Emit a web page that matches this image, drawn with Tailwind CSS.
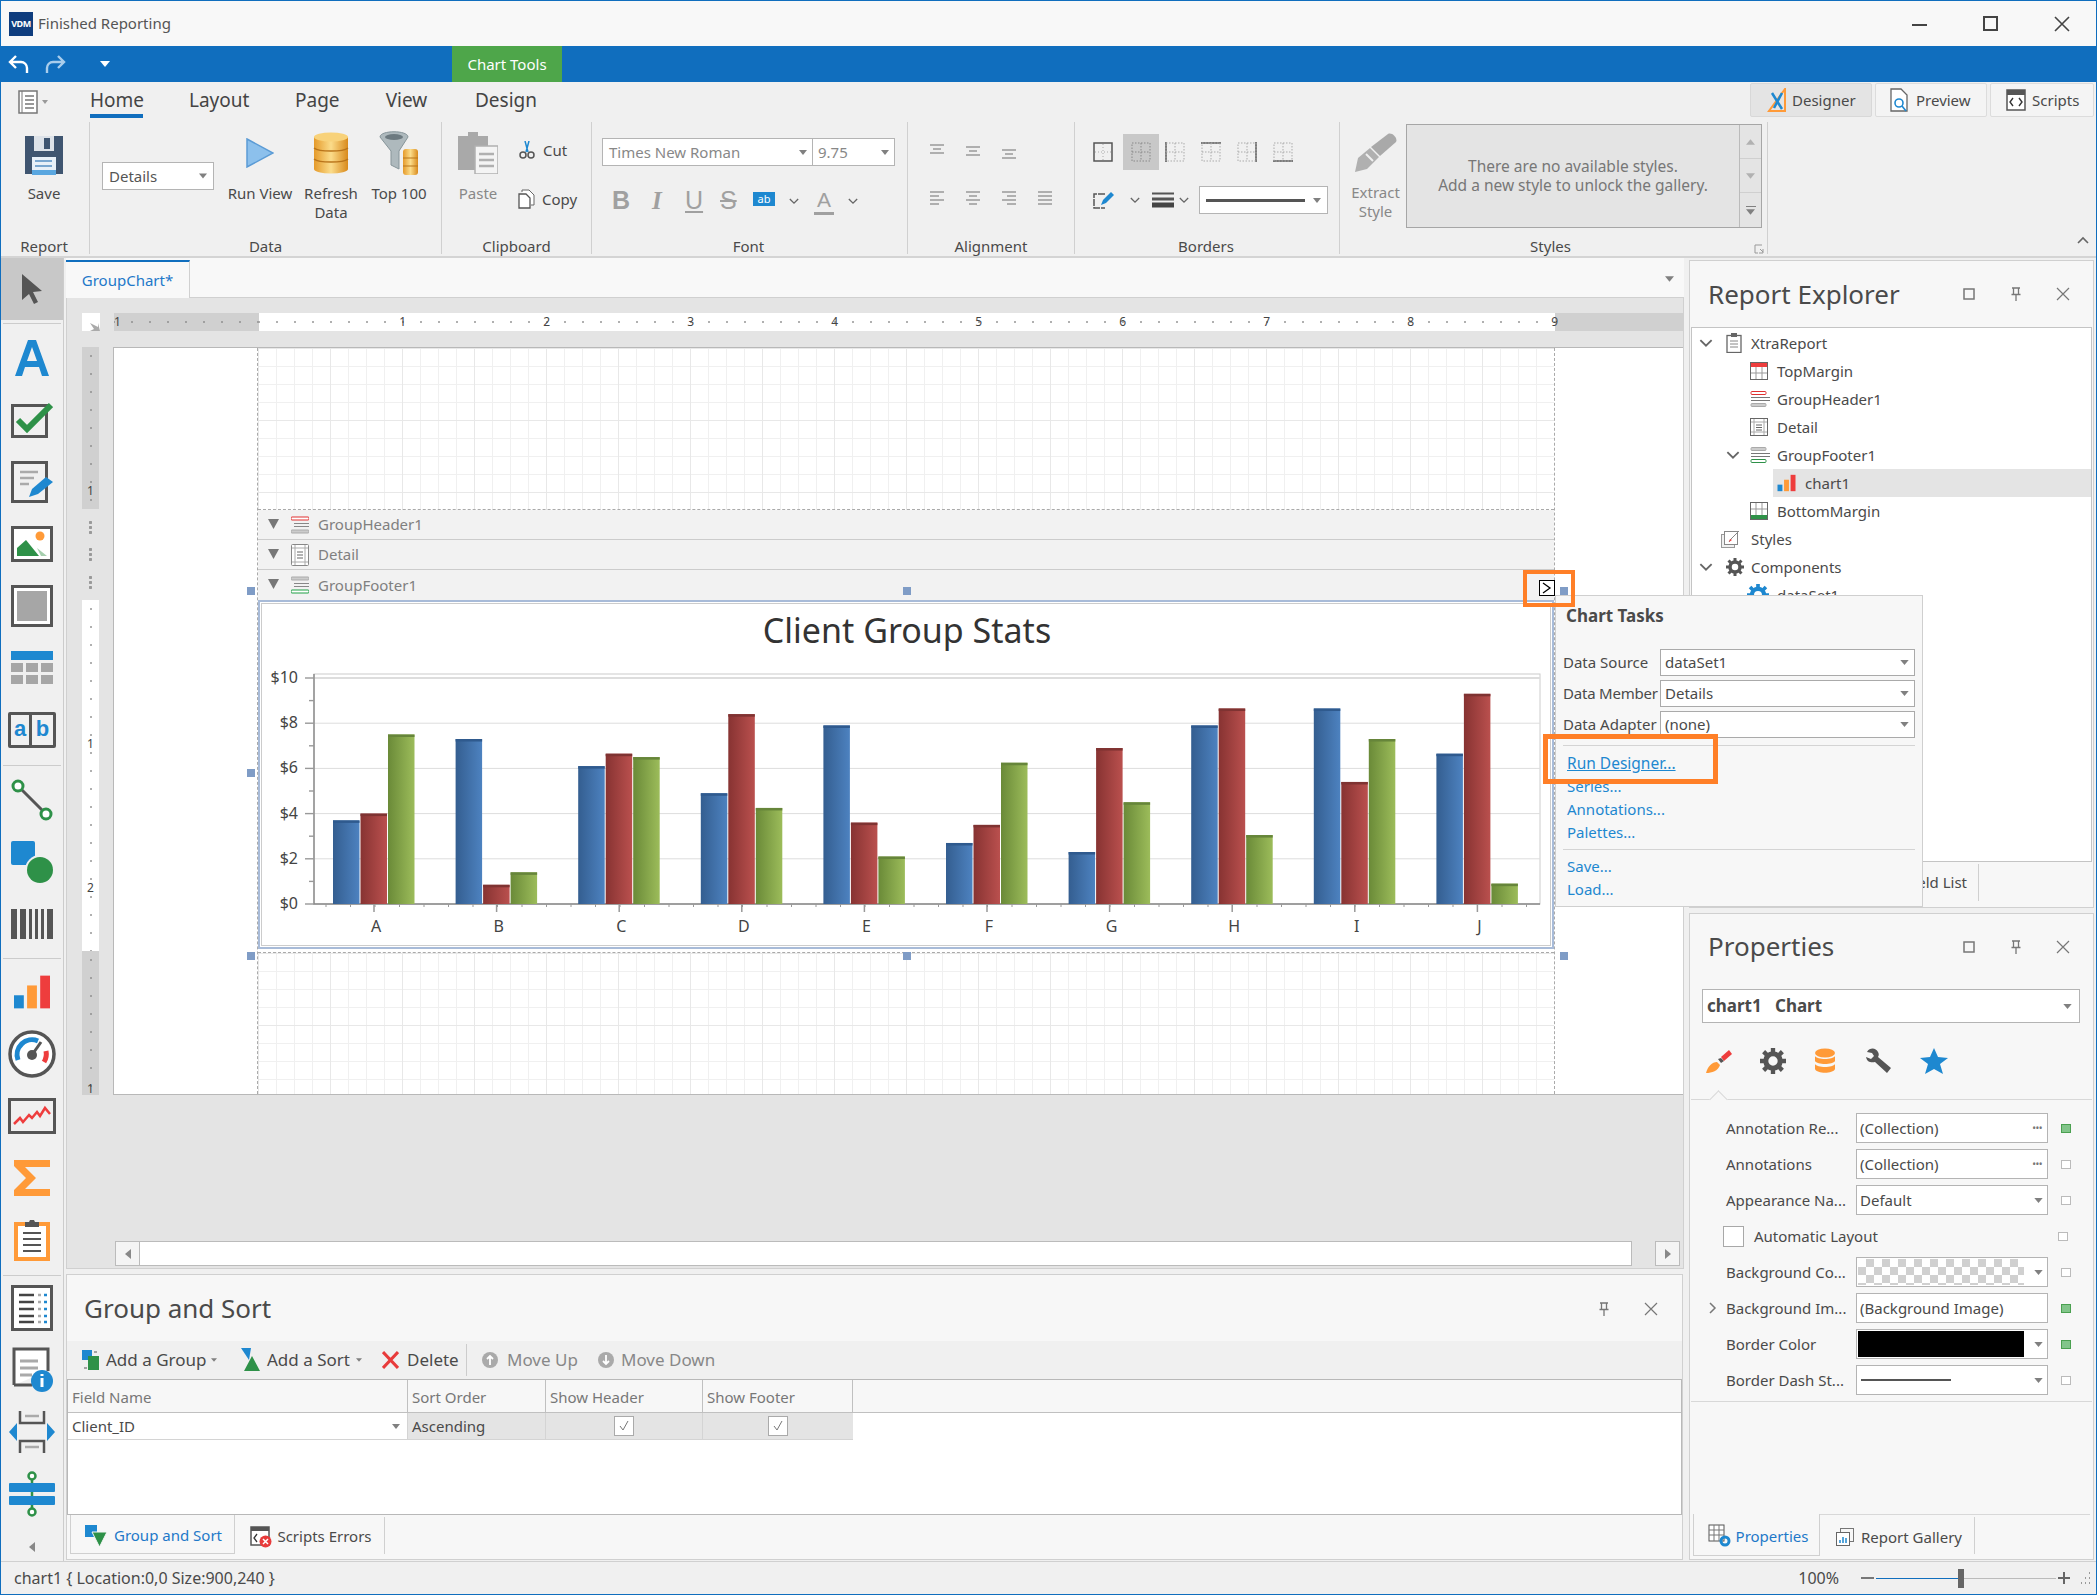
<!DOCTYPE html>
<html lang="en">
<head>
<meta charset="UTF-8">
<title>Finished Reporting</title>
<script src="https://cdn.jsdelivr.net/npm/@tailwindcss/browser@4"></script>
</head>
<body class="bg-white">
<svg class="absolute w-0 h-0">
  <symbol id="tri" viewBox="0 0 10 6"><path d="M0 0h10L5 6z" fill="#808080"/></symbol>
  <symbol id="chev" viewBox="0 0 12 8"><path d="M1 1l5 5 5-5" fill="none" stroke="#666" stroke-width="1.6"/></symbol>
  <symbol id="close" viewBox="0 0 16 16"><path d="M2 2l12 12M14 2L2 14" stroke="#777" stroke-width="1.2" fill="none"/></symbol>
  <symbol id="maxi" viewBox="0 0 16 16"><rect x="3" y="3" width="10" height="10" fill="none" stroke="#777" stroke-width="1.5"/></symbol>
  <symbol id="pin" viewBox="0 0 16 16"><path d="M4 2h8M5.500 2v6M10.500 2v6M3.500 8.500h9M8 9v6" fill="none" stroke="#777" stroke-width="1.3"/></symbol>
  <symbol id="mark" viewBox="0 0 10 9"><rect x=".5" y=".5" width="9" height="8" fill="#fff" stroke="#bbb"/></symbol>
  <symbol id="markon" viewBox="0 0 10 9"><rect x=".5" y=".5" width="9" height="8" fill="#82c58a" stroke="#4aa050"/></symbol>
  <symbol id="alignc" viewBox="0 0 16 14"><path d="M1 1h14M4 5h8M1 9h14M4 13h8" stroke="#999" stroke-width="1.300"/></symbol>
  <symbol id="alignl" viewBox="0 0 16 14"><path d="M1 1h14M1 5h9M1 9h14M1 13h9" stroke="#999" stroke-width="1.300"/></symbol>
  <symbol id="alignr" viewBox="0 0 16 14"><path d="M1 1h14M6 5h9M1 9h14M6 13h9" stroke="#999" stroke-width="1.300"/></symbol>
  <symbol id="alignj" viewBox="0 0 16 14"><path d="M1 1h14M1 5h14M1 9h14M1 13h14" stroke="#999" stroke-width="1.300"/></symbol>
  <symbol id="minibars" viewBox="0 0 24 22"><rect x="1" y="13" width="6" height="8" fill="#1e88d0"/><rect x="9" y="7" width="6" height="14" fill="#ff9a38"/><rect x="17" y="1" width="6" height="20" fill="#ee3d3d"/></symbol>
  <defs>
    <linearGradient id="gb"><stop offset="0" stop-color="#345e90"/><stop offset="1" stop-color="#4d82c0"/></linearGradient>
    <linearGradient id="gr"><stop offset="0" stop-color="#873332"/><stop offset="1" stop-color="#ba504e"/></linearGradient>
    <linearGradient id="gg"><stop offset="0" stop-color="#6a8a38"/><stop offset="1" stop-color="#9cbc5a"/></linearGradient>
    <linearGradient id="gold"><stop offset="0" stop-color="#e59a2a"/><stop offset=".5" stop-color="#fbdc8a"/><stop offset="1" stop-color="#d98a1c"/></linearGradient>
  </defs>
</svg>

<div class="w-[2097px] h-[1595px] flex flex-col overflow-hidden border border-[#106ebe] bg-[#f0f0f0] text-[#4a4a4a] text-[15px] font-['Noto_Sans',sans-serif] relative">

  <!-- title bar -->
  <div class="h-[45px] shrink-0 bg-[#f8f8f8] flex items-center pl-[8px]">
    <div class="w-[24px] h-[24px] bg-[#0f3d7e] text-white text-[9px] font-bold flex items-center justify-center tracking-tighter">VDM</div>
    <span class="ml-[5px] text-[15px] text-[#555]">Finished Reporting</span>
    <div class="ml-auto flex items-center gap-[56px] pr-[26px]">
      <div class="w-[15px] h-[2px] bg-[#444] mt-[2px]"></div>
      <div class="w-[15px] h-[15px] border-2 border-[#444]"></div>
      <svg class="w-[16px] h-[16px]" viewBox="0 0 16 16"><path d="M1 1l14 14M15 1L1 15" stroke="#444" stroke-width="1.600" fill="none"/></svg>
    </div>
  </div>

  <!-- quick access -->
  <div class="h-[36px] shrink-0 bg-[#106ebe] flex items-center pl-[7px] relative">
    <svg class="w-[22px] h-[22px]" viewBox="0 0 22 22"><path d="M8 3L2 9l6 6M2 9h11a6 6 0 0 1 6 6v5" fill="none" stroke="#fff" stroke-width="2.400"/></svg>
    <svg class="w-[22px] h-[22px] ml-[14px]" viewBox="0 0 22 22"><path d="M14 3l6 6-6 6M20 9H9a6 6 0 0 0-6 6v5" fill="none" stroke="#a9cdec" stroke-width="2.400"/></svg>
    <svg class="w-[10px] h-[6px] ml-[34px]" viewBox="0 0 10 6"><path d="M0 0h10L5 6z" fill="#fff"/></svg>
    <div class="h-full w-[110px] ml-[342px] bg-[#4ea64a] text-white flex items-center justify-center text-[15px]">Chart Tools</div>
  </div>

  <!-- ribbon -->
  <div class="h-[176px] shrink-0 bg-[#f0f0f0] border-b-2 border-[#d4d4d4] flex flex-col">
    <div class="h-[40px] shrink-0 flex items-start relative">
      <svg class="w-[32px] h-[24px] ml-[17px] mt-[8px]" viewBox="0 0 32 24"><rect x="1" y="1" width="18" height="22" fill="#fff" stroke="#777" stroke-width="1.500"/><path d="M4 1v22" stroke="#777"/><path d="M7 6h9M7 10h9M7 14h9M7 18h9" stroke="#777" stroke-width="1.300"/><path d="M24 10h6l-3 4z" fill="#999"/></svg>
      <div class="ml-[40px] h-[36px] border-b-[4px] border-[#106ebe] text-[19px] text-[#444] pt-[4px] w-[53px] text-center">Home</div>
      <div class="ml-[46px] text-[19px] text-[#444] pt-[4px] w-[60px] text-center">Layout</div>
      <div class="ml-[46px] text-[19px] text-[#444] pt-[4px] w-[44px] text-center">Page</div>
      <div class="ml-[46px] text-[19px] text-[#444] pt-[4px] w-[43px] text-center">View</div>
      <div class="ml-[47px] text-[19px] text-[#444] pt-[4px] w-[61px] text-center">Design</div>
      <div class="ml-auto flex gap-[3px] pt-[1px] pr-[2px] h-[35px]">
        <div class="w-[122px] border border-[#d8d8d8] rounded-[2px] bg-[#e4e4e4] flex items-center pl-[16px] gap-[3px] text-[15px]">
          <svg class="w-[22px] h-[24px]" viewBox="0 0 22 24"><path d="M18 1v22H2z" fill="none" stroke="#ff9a38" stroke-width="2"/><path d="M5 5l10 16M15 5L7 20" stroke="#1e88d0" stroke-width="2.500"/></svg>Designer</div>
        <div class="w-[112px] border border-[#dcdcdc] rounded-[2px] bg-[#f4f4f4] flex items-center pl-[14px] gap-[8px] text-[15px]">
          <svg class="w-[18px] h-[24px]" viewBox="0 0 18 24"><path d="M1 23V1h10l6 6v16z" fill="#fff" stroke="#666" stroke-width="1.300"/><circle cx="9" cy="15" r="4" fill="none" stroke="#1e88d0" stroke-width="1.600"/><path d="M12 18l4 5" stroke="#1e88d0" stroke-width="1.600"/></svg>Preview</div>
        <div class="w-[104px] border border-[#dcdcdc] rounded-[2px] bg-[#f4f4f4] flex items-center pl-[15px] gap-[6px] text-[15px]">
          <svg class="w-[20px] h-[22px]" viewBox="0 0 20 22"><rect x="1" y="1" width="18" height="20" fill="#fff" stroke="#555" stroke-width="1.500"/><rect x="1" y="1" width="18" height="5" fill="#555"/><path d="M7 9l-3 4 3 4M13 9l3 4-3 4" fill="none" stroke="#333" stroke-width="1.400"/></svg>Scripts</div>
      </div>
    </div>
    <div class="h-[132px] flex">
      <!-- Report -->
      <div class="w-[89px] border-r border-[#d0d0d0] flex flex-col items-center">
        <div class="h-[62px] pt-[13px] pr-[2px]">
          <svg class="w-[40px] h-[40px]" viewBox="0 0 40 40"><path d="M1 1h38v38H1z" fill="#3f5570"/><rect x="10" y="1" width="20" height="15" fill="#dde2e8"/><rect x="20" y="3" width="6" height="11" fill="#3f5570"/><rect x="8" y="22" width="24" height="18" fill="#e8f0f8"/><rect x="11" y="25" width="17" height="2" fill="#7aa7d0"/><rect x="11" y="30" width="17" height="2" fill="#7aa7d0"/><rect x="8" y="35" width="24" height="5" fill="#5aa7e0"/></svg>
        </div>
        <div class="leading-[19px] pr-[2px]">Save</div>
        <div class="mt-auto mb-[-2px] leading-[20px] pr-[2px]">Report</div>
      </div>
      <!-- Data -->
      <div class="w-[352px] border-r border-[#d0d0d0] flex flex-col">
        <div class="flex h-[112px]">
          <div class="ml-[12px] mt-[40px] w-[112px] h-[28px] bg-white border border-[#b4b4b4] flex items-center justify-between px-[6px] text-[15px] text-[#555]">Details<svg class="w-[8px] h-[6px]"><use href="#tri"/></svg></div>
          <div class="ml-[8px] w-[76px] flex flex-col items-center">
            <div class="h-[62px] flex items-center"><svg class="w-[28px] h-[30px]" viewBox="0 0 28 30"><path d="M1 1l26 14L1 29z" fill="#8cc0ec" stroke="#5b9bd5" stroke-width="1.500"/></svg></div>
            <div class="leading-[19px]">Run View</div>
          </div>
          <div class="w-[66px] flex flex-col items-center">
            <div class="h-[62px] flex items-center"><svg class="w-[36px] h-[42px]" viewBox="0 0 36 42"><rect x="1" y="5" width="34" height="32" fill="url(#gold)"/><ellipse cx="18" cy="37" rx="17" ry="4.500" fill="url(#gold)"/><ellipse cx="18" cy="5" rx="17" ry="4.500" fill="#f8d27a"/><path d="M1 16c5 4 29 4 34 0M1 27c5 4 29 4 34 0" fill="none" stroke="#b9741a" stroke-width="1.500"/></svg></div>
            <div class="leading-[19px] text-center">Refresh<br>Data</div>
          </div>
          <div class="w-[70px] flex flex-col items-center">
            <div class="h-[62px] flex items-center"><svg class="w-[40px] h-[44px]" viewBox="0 0 40 44"><path d="M1 6c0-7 28-7 28 0l-9 14v18l-8-4V20z" fill="#aeb9bd" stroke="#87959a"/><ellipse cx="15" cy="6" rx="9" ry="3" fill="#6d7a80"/><rect x="24" y="18" width="15" height="26" rx="3" fill="url(#gold)"/><path d="M24 27h15M24 35h15" stroke="#b9741a"/></svg></div>
            <div class="leading-[19px]">Top 100</div>
          </div>
        </div>
        <div class="mt-auto mb-[-2px] leading-[20px] text-center">Data</div>
      </div>
      <!-- Clipboard -->
      <div class="w-[150px] border-r border-[#d0d0d0] flex flex-col">
        <div class="flex h-[112px]">
          <div class="w-[70px] flex flex-col items-center pl-[4px] pr-[2px]">
            <div class="h-[62px] flex items-center"><svg class="w-[40px] h-[42px]" viewBox="0 0 40 42"><path d="M0 4h10V0h10v4h10v34H0z" fill="#a9a9a9"/><rect x="17" y="14" width="23" height="28" fill="#f4f4f4" stroke="#b0b0b0" stroke-width="1.500"/><path d="M21 22h15M21 28h15M21 34h15" stroke="#b0b0b0" stroke-width="2.500"/></svg></div>
            <div class="leading-[19px] text-[#888]">Paste</div>
          </div>
          <div class="flex flex-col pl-[6px]">
            <div class="h-[30px] mt-[13px] flex items-center gap-[7px]"><svg class="w-[18px] h-[18px]" viewBox="0 0 18 18"><path d="M7 0l3 11M11 0L8 11" stroke="#1e88d0" stroke-width="1.500"/><circle cx="5" cy="14" r="3" fill="none" stroke="#555" stroke-width="1.500"/><circle cx="13" cy="14" r="3" fill="none" stroke="#555" stroke-width="1.500"/></svg>Cut</div>
            <div class="h-[30px] mt-[19px] flex items-center gap-[7px]"><svg class="w-[17px] h-[20px]" viewBox="0 0 17 20"><path d="M4 3V1h7l5 5v10h-3" fill="#fff" stroke="#666"/><path d="M1 5h7l4 4v10H1z" fill="#fff" stroke="#555" stroke-width="1.300"/></svg>Copy</div>
          </div>
        </div>
        <div class="mt-auto mb-[-2px] leading-[20px] text-center">Clipboard</div>
      </div>
      <!-- Font -->
      <div class="w-[316px] border-r border-[#d0d0d0] flex flex-col">
        <div class="flex mt-[16px] ml-[10px] h-[28px] w-[293px] border border-[#b4b4b4] bg-white text-[#888]">
          <div class="w-[210px] border-r border-[#b4b4b4] flex items-center justify-between pl-[6px] pr-[5px]">Times New Roman<svg class="w-[8px] h-[5px]"><use href="#tri"/></svg></div>
          <div class="flex-1 flex items-center justify-between pl-[5px] pr-[5px]">9.75<svg class="w-[8px] h-[5px]"><use href="#tri"/></svg></div>
        </div>
        <div class="flex items-center ml-[20px] mt-[20px] h-[30px] text-[#a0a0a0]">
          <span class="w-[37px] text-[25px] font-bold font-['Liberation_Sans',sans-serif]">B</span>
          <span class="w-[36px] text-[25px] font-bold italic font-['Liberation_Serif',serif] pl-[3px]">I</span>
          <span class="w-[35px] text-[25px] underline font-['Liberation_Sans',sans-serif]">U</span>
          <span class="w-[33px] text-[25px] line-through font-['Liberation_Sans',sans-serif]">S</span>
          <div class="w-[22px] h-[14px] mb-[5px] bg-[#1e88d0] text-white text-[11px] leading-[14px] text-center">ab</div>
          <svg class="w-[10px] h-[7px] ml-[14px]"><use href="#chev"/></svg>
          <span class="ml-[15px] w-[20px] text-[21px] text-center border-b-[3px] border-[#a0a0a0] leading-[24px] font-['Liberation_Sans',sans-serif]">A</span>
          <svg class="w-[10px] h-[7px] ml-[14px]"><use href="#chev"/></svg>
        </div>
        <div class="mt-auto mb-[-2px] leading-[20px] text-center pr-[2px]">Font</div>
      </div>
      <!-- Alignment -->
      <div class="w-[167px] border-r border-[#d0d0d0] flex flex-col">
        <div class="flex ml-[21px] gap-[20px] mt-[22px]">
          <svg class="w-[16px] h-[10px]" viewBox="0 0 16 10"><path d="M1 1h14M4 5h8M1 9h14" stroke="#999" stroke-width="1.300"/></svg>
          <svg class="w-[16px] h-[10px] mt-[2px]" viewBox="0 0 16 10"><path d="M1 1h14M4 5h8M1 9h14" stroke="#999" stroke-width="1.300"/></svg>
          <svg class="w-[16px] h-[10px] mt-[5px]" viewBox="0 0 16 10"><path d="M1 1h14M4 5h8M1 9h14" stroke="#999" stroke-width="1.300"/></svg>
        </div>
        <div class="flex ml-[21px] gap-[20px] mt-[32px]">
          <svg class="w-[16px] h-[14px]"><use href="#alignl"/></svg>
          <svg class="w-[16px] h-[14px]"><use href="#alignc"/></svg>
          <svg class="w-[16px] h-[14px]"><use href="#alignr"/></svg>
          <svg class="w-[16px] h-[14px]"><use href="#alignj"/></svg>
        </div>
        <div class="mt-auto mb-[-2px] leading-[20px] text-center">Alignment</div>
      </div>
      <!-- Borders -->
      <div class="w-[265px] border-r border-[#d0d0d0] flex flex-col">
        <div class="flex items-center mt-[12px] ml-[18px] h-[36px]">
          <div class="w-[36px] flex justify-start"><svg class="w-[20px] h-[20px]" viewBox="0 0 20 20"><rect x="1" y="1" width="18" height="18" fill="none" stroke="#555" stroke-width="1.500"/><path d="M10 2v16M2 10h16" stroke="#aaa" stroke-dasharray="1 2"/></svg></div>
          <div class="w-[36px] h-[36px] bg-[#c8c8c8] -ml-[6px] mr-[6px] flex items-center justify-center"><svg class="w-[20px] h-[20px]" viewBox="0 0 20 20"><path d="M1 1h18v18H1zM10 1v18M1 10h18" fill="none" stroke="#888" stroke-dasharray="1.500 1.500"/></svg></div>
          <svg class="w-[20px] h-[20px] mr-[16px]" viewBox="0 0 20 20"><path d="M1 0v20" stroke="#555" stroke-width="1.500"/><path d="M1 1h18v18H1zM10 1v18M1 10h18" fill="none" stroke="#aaa" stroke-dasharray="1.500 1.500"/></svg>
          <svg class="w-[20px] h-[20px] mr-[16px]" viewBox="0 0 20 20"><path d="M0 1h20" stroke="#555" stroke-width="1.500"/><path d="M1 1h18v18H1zM10 1v18M1 10h18" fill="none" stroke="#aaa" stroke-dasharray="1.500 1.500"/></svg>
          <svg class="w-[20px] h-[20px] mr-[16px]" viewBox="0 0 20 20"><path d="M19 0v20" stroke="#555" stroke-width="1.500"/><path d="M1 1h18v18H1zM10 1v18M1 10h18" fill="none" stroke="#aaa" stroke-dasharray="1.500 1.500"/></svg>
          <svg class="w-[20px] h-[20px]" viewBox="0 0 20 20"><path d="M0 19h20" stroke="#555" stroke-width="1.500"/><path d="M1 1h18v18H1zM10 1v18M1 10h18" fill="none" stroke="#aaa" stroke-dasharray="1.500 1.500"/></svg>
        </div>
        <div class="flex items-center mt-[16px] ml-[18px] h-[28px]">
          <svg class="w-[22px] h-[18px]" viewBox="0 0 22 18"><path d="M12 3H1v14h11" fill="none" stroke="#555" stroke-width="1.500" stroke-dasharray="7 1"/><path d="M8 14l2-5 8-8 3 3-8 8z" fill="#1e88d0"/></svg>
          <svg class="w-[10px] h-[7px] ml-[15px]"><use href="#chev"/></svg>
          <svg class="w-[22px] h-[16px] ml-[12px]" viewBox="0 0 22 16"><path d="M0 1.500h22" stroke="#555" stroke-width="2"/><path d="M0 7h22" stroke="#555" stroke-width="3"/><path d="M0 13h22" stroke="#444" stroke-width="5"/></svg>
          <svg class="w-[10px] h-[7px] ml-[5px]"><use href="#chev"/></svg>
          <div class="w-[129px] h-[28px] ml-[10px] bg-white border border-[#b4b4b4] flex items-center pl-[6px] pr-[6px] gap-[8px]"><div class="flex-1 h-[3px] bg-[#555]"></div><svg class="w-[8px] h-[5px]"><use href="#tri"/></svg></div>
        </div>
        <div class="mt-auto mb-[-2px] leading-[20px] text-center pr-[2px]">Borders</div>
      </div>
      <!-- Styles -->
      <div class="w-[428px] border-r border-[#d0d0d0] flex flex-col relative">
        <div class="flex h-[112px]">
          <div class="w-[66px] flex flex-col items-center pt-[11px] pl-[5px]">
            <svg class="w-[44px] h-[40px] mb-[10px]" viewBox="0 0 44 40"><path d="M1 39l3-14 12-10 9 9-12 12z" fill="#b0b0b0"/><path d="M17 14L34 1c4-2 10 4 8 8L26 23z" fill="#a9a9a9"/><path d="M12 21l7 7" stroke="#f0f0f0" stroke-width="2"/></svg>
            <div class="leading-[19px] text-center text-[#888]">Extract<br>Style</div>
          </div>
          <div class="mt-[2px] h-[104px] w-[356px] border-[1.5px] border-[#a6a6a6] bg-[#e4e4e4] flex">
            <div class="flex-1 flex flex-col items-center justify-center text-[#777] leading-[19px] text-[15.500px]"><span>There are no available styles.</span><span>Add a new style to unlock the gallery.</span></div>
            <div class="w-[22px] border-l border-[#bbb] flex flex-col bg-[#e4e4e4]">
              <div class="h-[34px] flex items-center justify-center border-b border-[#bbb] opacity-50"><svg class="w-[9px] h-[6px] rotate-180"><use href="#tri"/></svg></div>
              <div class="h-[34px] flex items-center justify-center border-b border-[#bbb] opacity-50"><svg class="w-[9px] h-[6px]"><use href="#tri"/></svg></div>
              <div class="flex-1 flex flex-col items-center justify-center gap-[2px]"><div class="w-[10px] h-[1px] bg-[#808080]"></div><svg class="w-[9px] h-[6px]"><use href="#tri"/></svg></div>
            </div>
          </div>
        </div>
        <div class="mt-auto mb-[-2px] leading-[20px] text-center pr-[6px]">Styles</div>
        <svg class="absolute right-[3px] bottom-[0px] w-[10px] h-[10px]" viewBox="0 0 10 10"><path d="M1 1h7M1 1v8h3M6 5l3 3M9 5v4H5" fill="none" stroke="#999"/></svg>
      </div>
      <div class="flex-1 flex items-end justify-end pr-[7px] pb-[10px]">
        <svg class="w-[12px] h-[8px] rotate-180"><use href="#chev"/></svg>
      </div>
    </div>
  </div>

  <!-- main area -->
  <div class="flex-1 min-h-0 flex">
    <!-- toolbox -->
    <div class="w-[63px] shrink-0 bg-[#f0f0f0] border-r border-[#ccc] flex flex-col items-center">
      <div class="w-full h-[62px] shrink-0 bg-[#c8c8c8] flex items-center justify-center"><svg class="w-[22px] h-[30px]" viewBox="0 0 22 30"><path d="M1 0l20 17-9 1 5 10-4 2-5-10-7 6z" fill="#555"/></svg></div>
      <div class="w-[58px] h-[1px] bg-[#ccc] mt-[3px] mb-[3px] shrink-0"></div>
      <div class="w-full h-[62px] shrink-0 flex items-center justify-center text-[#1e88d0]"><svg class="w-[34px] h-[38px]" viewBox="0 0 34 38"><path d="M0 37L13 1h8l13 36h-7l-3-9H10l-3 9zM12 22h10L17 8z" fill="#1e88d0" fill-rule="evenodd"/></svg></div>
      <div class="w-full h-[62px] shrink-0 flex items-center justify-center"><svg class="w-[42px] h-[36px]" viewBox="0 0 42 36"><rect x="1.500" y="3.500" width="34" height="31" fill="none" stroke="#555" stroke-width="3"/><path d="M7 18l9 9L40 3" fill="none" stroke="#2e9148" stroke-width="6"/></svg></div>
      <div class="w-full h-[62px] shrink-0 flex items-center justify-center"><svg class="w-[42px] h-[42px]" viewBox="0 0 42 42"><rect x="1.500" y="1.500" width="34" height="39" fill="none" stroke="#555" stroke-width="3"/><path d="M9 11h18M9 17h14M9 23h9" stroke="#aaa" stroke-width="2.500"/><path d="M18 36l3-8 14-12 7 5-15 12z" fill="#1e88d0"/></svg></div>
      <div class="w-full h-[62px] shrink-0 flex items-center justify-center"><svg class="w-[42px] h-[36px]" viewBox="0 0 42 36"><rect x="1.500" y="1.500" width="39" height="33" fill="#fff" stroke="#555" stroke-width="3"/><circle cx="29" cy="10" r="4.500" fill="#ff9a38"/><path d="M6 30V22l9-8 13 16z" fill="#2e9148"/><path d="M26 22l10 8h-6z" fill="#a6cfae"/></svg></div>
      <div class="w-full h-[62px] shrink-0 flex items-center justify-center"><svg class="w-[42px] h-[42px]" viewBox="0 0 42 42"><rect x="1.500" y="1.500" width="39" height="39" fill="#fff" stroke="#555" stroke-width="3"/><rect x="6" y="6" width="30" height="30" fill="#a6a6a6"/></svg></div>
      <div class="w-full h-[62px] shrink-0 flex items-center justify-center"><svg class="w-[42px] h-[34px]" viewBox="0 0 42 34"><rect width="42" height="9" fill="#1e88d0"/><path d="M0 12h12v9H0zM15 12h12v9H15zM30 12h12v9H30zM0 24h12v9H0zM15 24h12v9H15zM30 24h12v9H30z" fill="#a6a6a6"/></svg></div>
      <div class="w-full h-[62px] shrink-0 flex items-center justify-center"><div class="w-[48px] h-[36px] border-[3px] border-[#555] rounded-[2px] flex text-[#1e88d0] text-[22px] font-bold leading-[28px] text-center font-['Liberation_Sans',sans-serif]"><span class="w-1/2 border-r-[3px] border-[#555]">a</span><span class="w-1/2">b</span></div></div>
      <div class="w-[58px] h-[1px] bg-[#ccc] mt-[4px] mb-[3px] shrink-0"></div>
      <div class="w-full h-[62px] shrink-0 flex items-center justify-center"><svg class="w-[42px] h-[42px]" viewBox="0 0 42 42"><path d="M8 8l26 26" stroke="#555" stroke-width="3"/><circle cx="7" cy="7" r="5" fill="#fff" stroke="#2e9148" stroke-width="3"/><circle cx="35" cy="35" r="5" fill="#fff" stroke="#2e9148" stroke-width="3"/></svg></div>
      <div class="w-full h-[62px] shrink-0 flex items-center justify-center"><svg class="w-[42px] h-[42px]" viewBox="0 0 42 42"><rect width="24" height="24" rx="2" fill="#1e88d0"/><circle cx="29" cy="29" r="15" fill="#f0f0f0"/><circle cx="29" cy="29" r="13" fill="#2e9148"/></svg></div>
      <div class="w-full h-[62px] shrink-0 flex items-center justify-center"><svg class="w-[42px] h-[30px]" viewBox="0 0 42 30"><path d="M0 0h6v30H0zM9 0h6v30H9zM18 0h3v30h-3zM24 0h3v30h-3zM30 0h3v30h-3zM36 0h6v30h-6z" fill="#555"/></svg></div>
      <div class="w-[58px] h-[1px] bg-[#ccc] mt-[3px] mb-[2px] shrink-0"></div>
      <div class="w-full h-[62px] shrink-0 flex items-center justify-center"><svg class="w-[42px] h-[36px]"><use href="#minibars"/></svg></div>
      <div class="w-full h-[62px] shrink-0 flex items-center justify-center"><svg class="w-[48px] h-[48px]" viewBox="0 0 48 48"><circle cx="24" cy="24" r="22" fill="#fff" stroke="#555" stroke-width="3.500"/><path d="M10 30a15 15 0 0 1 20-19" fill="none" stroke="#1e88d0" stroke-width="5"/><path d="M38 21a15 15 0 0 1-2 11" fill="none" stroke="#ee3d3d" stroke-width="5"/><circle cx="24" cy="25" r="5" fill="#555"/><path d="M24 25l9-13" stroke="#555" stroke-width="3"/></svg></div>
      <div class="w-full h-[62px] shrink-0 flex items-center justify-center"><svg class="w-[48px] h-[36px]" viewBox="0 0 48 36"><rect x="1.500" y="1.500" width="45" height="33" fill="none" stroke="#555" stroke-width="3"/><path d="M6 26l6-6 3 4 6-7 3 3 5-6 3 4 5-8 5 6" fill="none" stroke="#ee3d3d" stroke-width="2.500"/></svg></div>
      <div class="w-full h-[62px] shrink-0 flex items-center justify-center"><svg class="w-[36px] h-[36px]" viewBox="0 0 36 36"><path d="M0 0h36v7H11l11 11-11 11h25v7H0v-6l12-12L0 6z" fill="#ff9a38"/></svg></div>
      <div class="w-full h-[62px] shrink-0 flex items-center justify-center"><svg class="w-[36px] h-[42px]" viewBox="0 0 36 42"><path d="M2 5h32v35H2z" fill="#fff" stroke="#ff9a38" stroke-width="4"/><path d="M11 5V3h4l1-2h4l1 2h4v5H11z" fill="#555"/><path d="M9 14h18M9 20h18M9 26h18M9 32h18" stroke="#555" stroke-width="2"/></svg></div>
      <div class="w-[58px] h-[1px] bg-[#ccc] mt-[4px] mb-[1px] shrink-0"></div>
      <div class="w-full h-[62px] shrink-0 flex items-center justify-center"><svg class="w-[42px] h-[46px]" viewBox="0 0 42 46"><rect x="1.500" y="1.500" width="39" height="43" fill="#fff" stroke="#555" stroke-width="3"/><path d="M8 10h15M8 17h15M8 24h15M8 31h15M8 37h15" stroke="#444" stroke-width="2.500"/><path d="M27 10h3M27 17h3M27 24h3M27 31h3M27 37h3" stroke="#aaa" stroke-width="2.500"/><path d="M33 10h3M33 17h3M33 24h3M33 31h3M33 37h3" stroke="#1e88d0" stroke-width="2.500"/></svg></div>
      <div class="w-full h-[62px] shrink-0 flex items-center justify-center"><svg class="w-[44px] h-[46px]" viewBox="0 0 44 46"><path d="M4 38V2h34v22" fill="#fff" stroke="#555" stroke-width="3"/><path d="M4 38h18" stroke="#555" stroke-width="3"/><path d="M10 14h18M10 21h18M10 28h12" stroke="#aaa" stroke-width="3"/><circle cx="32" cy="34" r="11" fill="#1e88d0"/><path d="M32 27v2M32 31v9" stroke="#fff" stroke-width="3"/></svg></div>
      <div class="w-full h-[62px] shrink-0 flex items-center justify-center"><svg class="w-[46px] h-[42px]" viewBox="0 0 46 42"><path d="M11 0v12h24V0M11 42V30h24v12" fill="none" stroke="#555" stroke-width="2.500"/><path d="M16 5h14M16 36h14" stroke="#aaa" stroke-width="2.500"/><path d="M0 21l8-9v18zM46 21l-8-9v18z" fill="#1e88d0"/></svg></div>
      <div class="w-full h-[62px] shrink-0 flex items-center justify-center"><svg class="w-[46px] h-[46px]" viewBox="0 0 46 46"><path d="M23 6v34" stroke="#2e9148" stroke-width="2.500"/><circle cx="23" cy="5" r="3.500" fill="#fff" stroke="#2e9148" stroke-width="2.500"/><circle cx="23" cy="41" r="3.500" fill="#fff" stroke="#2e9148" stroke-width="2.500"/><rect y="12" width="46" height="9" rx="1" fill="#1e88d0"/><rect y="25" width="46" height="9" rx="1" fill="#1e88d0"/></svg></div>
      <svg class="w-[6px] h-[10px] mt-[17px]" viewBox="0 0 6 10"><path d="M6 0v10L0 5z" fill="#888"/></svg>
    </div>

    <!-- center column -->
    <div class="w-[1620px] shrink-0 flex flex-col pl-[2px]">
      <div class="h-[40px] shrink-0 bg-[#f8f8f8] border-b border-[#d0d0d0] flex items-end relative">
        <div class="w-[124px] h-[38px] border-t-2 border-t-[#106ebe] border-r border-r-[#d0d0d0] bg-[#f8f8f8] text-[#1e79c9] flex items-center justify-center mb-[-1px]">GroupChart*</div>
        <svg class="ml-auto mr-[10px] mb-[15px] w-[9px] h-[6px]"><use href="#tri"/></svg>
      </div>
      <!-- design surface -->
      <div class="h-[971px] shrink-0 bg-[#e4e4e4] border-r border-b border-l border-[#d0d0d0] flex flex-col overflow-hidden relative">
        <!-- horizontal ruler -->
        <div class="flex h-[18px] mt-[15px] shrink-0 ml-[15px]">
          <div class="w-[18px] h-[18px] bg-white flex items-end justify-end"><svg class="w-[10px] h-[8px]" viewBox="0 0 10 8"><path d="M0 0l8 4V0l2 8H0l4-2z" fill="#aaa"/></svg></div>
          <div class="w-[14px]"></div>
          <div class="w-[145px] text-[12px] leading-[18px] text-[#444] bg-[#d0d0d0] bg-[radial-gradient(circle,#a0a0a0_0.8px,transparent_1px)] bg-[size:18px_18px] bg-[position:9px_0]">1</div>
          <div class="flex w-[1296px] bg-white text-[12px] leading-[18px] text-[#444] bg-[radial-gradient(circle,#b0b0b0_0.8px,transparent_1px)] bg-[size:18px_18px] bg-[position:9px_0]">
            <div class="w-[144px] text-right translate-x-[3px]">1</div><div class="w-[144px] text-right translate-x-[3px]">2</div><div class="w-[144px] text-right translate-x-[3px]">3</div><div class="w-[144px] text-right translate-x-[3px]">4</div><div class="w-[144px] text-right translate-x-[3px]">5</div><div class="w-[144px] text-right translate-x-[3px]">6</div><div class="w-[144px] text-right translate-x-[3px]">7</div><div class="w-[144px] text-right translate-x-[3px]">8</div><div class="w-[144px] text-right translate-x-[3px]">9</div>
          </div>
          <div class="flex-1 bg-[#d0d0d0]"></div>
        </div>
        <div class="flex mt-[16px] ml-[15px] shrink-0 h-[748px]">
          <!-- vertical ruler -->
          <div class="w-[18px] flex flex-col text-[12px] text-[#444] text-center">
            <div class="h-[162px] bg-[#d0d0d0] flex items-end justify-center leading-[20px] pb-[8px] bg-[radial-gradient(circle,#a0a0a0_0.8px,transparent_1px)] bg-[size:18px_18px]"><span>1</span></div>
            <div class="h-[91px] flex flex-col justify-around items-center py-[4px]">
              <div class="w-[3px] h-[14px] bg-[radial-gradient(circle,#999_1.400px,transparent_1.500px)] bg-[size:3px_5px]"></div>
              <div class="w-[3px] h-[14px] bg-[radial-gradient(circle,#999_1.400px,transparent_1.500px)] bg-[size:3px_5px]"></div>
              <div class="w-[3px] h-[14px] bg-[radial-gradient(circle,#999_1.400px,transparent_1.500px)] bg-[size:3px_5px]"></div>
            </div>
            <div class="h-[351px] bg-white flex flex-col justify-start leading-[16px] bg-[radial-gradient(circle,#b0b0b0_0.8px,transparent_1px)] bg-[size:18px_18px]"><span class="mt-[136px]">1</span><span class="mt-[128px]">2</span></div>
            <div class="h-[144px] bg-[#d0d0d0] flex items-end justify-center leading-[12px] bg-[radial-gradient(circle,#a0a0a0_0.8px,transparent_1px)] bg-[size:18px_18px]"><span>1</span></div>
          </div>
          <div class="w-[14px] shrink-0"></div>
          <!-- page -->
          <div class="w-[1570px] h-[748px] shrink-0 bg-white border-t border-l border-b border-[#b8b8b8] flex">
            <div class="w-[144px] shrink-0 border-r border-dashed border-[#aaa]"></div>
            <div class="w-[1297px] shrink-0 flex flex-col border-r border-dashed border-[#aaa]">
              <div class="h-[162px] shrink-0 border-b border-dashed border-[#aaa] bg-[linear-gradient(#e8e8e8_1px,transparent_1px),linear-gradient(90deg,#e8e8e8_1px,transparent_1px),linear-gradient(#f0f0f0_1px,transparent_1px),linear-gradient(90deg,#f0f0f0_1px,transparent_1px)] bg-[size:72px_72px,72px_72px,18px_18px,18px_18px]"></div>
              <div class="h-[30px] shrink-0 bg-[#f2f2f2] border-b border-[#ccc] flex items-center pl-[10px] gap-[12px] text-[#808080]"><svg class="w-[11px] h-[10px] mb-[2px]" viewBox="0 0 10 9"><path d="M0 0h10L5 9z" fill="#777"/></svg><svg class="w-[18px] h-[18px]" viewBox="0 0 18 18"><rect y="1" width="18" height="3" rx="1" fill="#fff" stroke="#e03030"/><path d="M3 7.500h15M3 10.500h15" stroke="#888"/><rect y="14" width="18" height="3" rx="1" fill="#ccc" stroke="#aaa"/></svg><span class="-ml-[3px]">GroupHeader1</span></div>
              <div class="h-[30px] shrink-0 bg-[#f2f2f2] border-b border-[#ccc] flex items-center pl-[10px] gap-[12px] text-[#808080]"><svg class="w-[11px] h-[10px] mb-[2px]" viewBox="0 0 10 9"><path d="M0 0h10L5 9z" fill="#777"/></svg><svg class="w-[18px] h-[22px]" viewBox="0 0 18 22"><rect x=".5" y=".5" width="17" height="21" rx="1" fill="#fff" stroke="#888"/><path d="M4 1v20M14 1v20M1 4h16M1 18h16" stroke="#aaa"/><path d="M6 8h6M6 11h6M6 14h6" stroke="#666"/></svg><span class="-ml-[3px]">Detail</span></div>
              <div class="h-[30px] shrink-0 bg-[#f2f2f2] flex items-center pl-[10px] gap-[12px] text-[#808080]"><svg class="w-[11px] h-[10px] mb-[2px]" viewBox="0 0 10 9"><path d="M0 0h10L5 9z" fill="#777"/></svg><svg class="w-[18px] h-[18px]" viewBox="0 0 18 18"><rect y="1" width="18" height="3" rx="1" fill="#ccc" stroke="#aaa"/><path d="M3 7.500h15M3 10.500h15" stroke="#888"/><rect y="14" width="18" height="3" rx="1" fill="#fff" stroke="#1fa044"/></svg><span class="-ml-[3px]">GroupFooter1</span></div>
              <!-- chart -->
              <div class="h-[349px] shrink-0 bg-white border-2 border-[#a8bbd8] outline outline-[#ccc] -outline-offset-4 overflow-hidden">
                <svg id="chart" class="block w-[1297px] h-[349px] -ml-[2px] -mt-[2px] font-['Noto_Sans',sans-serif]" viewBox="0 0 1297 349"></svg>
              </div>
              <div class="flex-1 border-t border-dashed border-[#aaa] mt-[3px] bg-[linear-gradient(#e8e8e8_1px,transparent_1px),linear-gradient(90deg,#e8e8e8_1px,transparent_1px),linear-gradient(#f0f0f0_1px,transparent_1px),linear-gradient(90deg,#f0f0f0_1px,transparent_1px)] bg-[size:72px_72px,72px_72px,18px_18px,18px_18px]"></div>
            </div>
          </div>
        </div>
        <!-- scrollbar -->
        <div class="mt-auto mb-[2px] ml-[48px] mr-[3px] h-[25px] bg-[#e4e4e4] flex shrink-0">
          <div class="w-[25px] h-full bg-[#f4f4f4] border border-[#bbb] flex items-center justify-center"><svg class="w-[6px] h-[10px]" viewBox="0 0 6 10"><path d="M6 0v10L0 5z" fill="#888"/></svg></div>
          <div class="w-[1492px] h-full bg-white border-y border-r border-[#bbb]"></div>
          <div class="ml-auto w-[25px] h-full bg-[#f4f4f4] border border-[#bbb] flex items-center justify-center"><svg class="w-[6px] h-[10px] rotate-180" viewBox="0 0 6 10"><path d="M6 0v10L0 5z" fill="#888"/></svg></div>
        </div>
      </div>

      <!-- group and sort -->
      <div class="mt-[5px] h-[286px] shrink-0 bg-[#f7f7f7] border border-[#d0d0d0] flex flex-col mr-[1px]">
        <div class="h-[66px] shrink-0 flex items-center pl-[17px] text-[26px] text-[#4a4a4a] relative">Group and Sort
          <svg class="absolute right-[70px] top-[26px] w-[16px] h-[16px]"><use href="#pin"/></svg>
          <svg class="absolute right-[23px] top-[26px] w-[16px] h-[16px]"><use href="#close"/></svg>
        </div>
        <div class="h-[39px] shrink-0 bg-[#f0f0f0] flex items-center text-[#4a4a4a] border-b border-[#b8b8b8] text-[17px]">
          <svg class="w-[19px] h-[22px] ml-[14px]" viewBox="0 0 19 22"><path d="M3 3h13M3 19h13" stroke="#555" stroke-dasharray="3 2"/><rect x="1" y="1" width="10" height="10" fill="#1e88d0"/><rect x="7" y="7" width="11" height="14" fill="#2e9148"/></svg>
          <span class="ml-[6px] w-[101px]">Add a Group</span><svg class="w-[6px] h-[4px] ml-[4px]"><use href="#tri"/></svg>
          <svg class="w-[20px] h-[24px] ml-[24px]" viewBox="0 0 20 24"><path d="M0 0h10l-2 12z" fill="#1e88d0"/><path d="M11 8l8 15H3z" fill="#2e9148"/></svg>
          <span class="ml-[6px] w-[85px]">Add a Sort</span><svg class="w-[6px] h-[4px] ml-[4px]"><use href="#tri"/></svg>
          <svg class="w-[17px] h-[18px] ml-[20px]" viewBox="0 0 17 18"><path d="M1 1l15 16M16 1L1 17" stroke="#e83b3b" stroke-width="3"/></svg>
          <span class="ml-[8px] w-[49px]">Delete</span>
          <div class="w-px h-[32px] bg-[#ccc] ml-[10px]"></div>
          <svg class="w-[16px] h-[16px] ml-[15px]" viewBox="0 0 16 16"><circle cx="8" cy="8" r="8" fill="#aaa"/><path d="M8 13V4M5 7l3-3 3 3" fill="none" stroke="#fff" stroke-width="1.800"/></svg>
          <span class="ml-[9px] w-[72px] text-[#888]">Move Up</span>
          <svg class="w-[16px] h-[16px] ml-[19px]" viewBox="0 0 16 16"><circle cx="8" cy="8" r="8" fill="#aaa"/><path d="M8 3v9M5 9l3 3 3-3" fill="none" stroke="#fff" stroke-width="1.800"/></svg>
          <span class="ml-[7px] text-[#888]">Move Down</span>
        </div>
        <div class="h-[135px] shrink-0 bg-white border-x border-b border-[#b8b8b8] flex flex-col text-[15px]">
          <div class="flex h-[33px] shrink-0 bg-[#f7f7f7] border-b border-[#c0c0c0] text-[#777]">
            <div class="w-[340px] border-r border-[#c0c0c0] flex items-center pl-[4px] pt-[2px]">Field Name</div>
            <div class="w-[138px] border-r border-[#c0c0c0] flex items-center pl-[4px] pt-[2px]">Sort Order</div>
            <div class="w-[157px] border-r border-[#c0c0c0] flex items-center pl-[4px] pt-[2px]">Show Header</div>
            <div class="w-[150px] border-r border-[#c0c0c0] flex items-center pl-[4px] pt-[2px]">Show Footer</div>
          </div>
          <div class="flex h-[27px] shrink-0 border-b border-[#d4d4d4] w-[785px]">
            <div class="w-[340px] border-r border-[#d4d4d4] flex items-center justify-between pl-[4px] pr-[7px] bg-white">Client_ID<svg class="w-[8px] h-[5px]"><use href="#tri"/></svg></div>
            <div class="w-[138px] border-r border-[#d4d4d4] flex items-center pl-[4px] bg-[#e4e4e4]">Ascending</div>
            <div class="w-[157px] border-r border-[#d4d4d4] flex items-center justify-center bg-[#e4e4e4]"><div class="w-[20px] h-[20px] bg-white border border-[#aaa] flex items-center justify-center"><svg class="w-[12px] h-[12px]" viewBox="0 0 12 12"><path d="M2 6l3 4 5-9" fill="none" stroke="#777"/></svg></div></div>
            <div class="w-[150px] flex items-center justify-center bg-[#e4e4e4]"><div class="w-[20px] h-[20px] bg-white border border-[#aaa] flex items-center justify-center"><svg class="w-[12px] h-[12px]" viewBox="0 0 12 12"><path d="M2 6l3 4 5-9" fill="none" stroke="#777"/></svg></div></div>
          </div>
        </div>
        <div class="flex-1 flex items-start pl-[3px]">
          <div class="w-[165px] h-[39px] pt-[3px] border-x border-b border-[#d0d0d0] bg-[#f7f7f7] text-[#1e79c9] flex items-center justify-center gap-[7px] pl-[2px]"><svg class="w-[22px] h-[22px]" viewBox="0 0 22 22"><rect x="0" y="0" width="12" height="12" fill="#1e88d0"/><path d="M7 7h15l-7.500 15z" fill="#2e9148" stroke="#f7f7f7"/></svg>Group and Sort</div>
          <div class="w-[150px] h-[37px] mt-[2px] pt-[2px] border-r border-[#d0d0d0] flex items-center justify-center gap-[5px] pl-[3px]"><svg class="w-[22px] h-[22px]" viewBox="0 0 22 22"><rect x="1" y="1" width="18" height="18" fill="#fff" stroke="#555" stroke-width="1.500"/><rect x="1" y="1" width="18" height="4" fill="#555"/><path d="M7 8l-3 4 3 4" fill="none" stroke="#333" stroke-width="1.300"/><circle cx="15.500" cy="15.500" r="6" fill="#e83b3b"/><path d="M13 13l5 5M18 13l-5 5" stroke="#fff" stroke-width="1.500"/></svg>Scripts Errors</div>
        </div>
      </div>
    </div>

    <!-- right column -->
    <div class="flex-1 min-w-0 flex flex-col pl-[5px] pr-[2px]">
      <div class="h-[648px] mt-[2px] shrink-0 bg-[#f7f7f7] border border-[#d0d0d0] flex flex-col">
        <div class="h-[66px] shrink-0 flex items-center pl-[18px] text-[26px] text-[#4a4a4a]">Report Explorer
          <div class="ml-auto flex items-center gap-[31px] pr-[22px]">
            <svg class="w-[16px] h-[16px]"><use href="#maxi"/></svg><svg class="w-[16px] h-[16px]"><use href="#pin"/></svg><svg class="w-[16px] h-[16px]"><use href="#close"/></svg>
          </div>
        </div>
        <div class="h-[535px] shrink-0 mx-[1px] bg-white border border-[#c4c4c4] overflow-hidden text-[15px] py-[1px]">
          <div class="h-[28px] flex items-center pl-[7px]"><svg class="w-[14px] h-[9px] mr-[13px]"><use href="#chev"/></svg><svg class="w-[16px] h-[20px] mr-[9px]" viewBox="0 0 16 20"><rect x="1" y="2.500" width="14" height="17" fill="#fff" stroke="#666" stroke-width="1.300"/><rect x="5" y="0" width="6" height="4" fill="#666"/><path d="M4 8h8M4 11h8M4 14h8" stroke="#888"/></svg>XtraReport</div>
          <div class="h-[28px] flex items-center pl-[58px]"><svg class="w-[18px] h-[18px] mr-[9px]" viewBox="0 0 18 18"><rect x=".5" y=".5" width="17" height="17" fill="#fff" stroke="#666"/><rect x="1" y="1" width="16" height="4" fill="#ee3d3d"/><path d="M6 5v12M12 5v12M1 11h16" stroke="#999"/></svg>TopMargin</div>
          <div class="h-[28px] flex items-center pl-[58px]"><svg class="w-[20px] h-[16px] mr-[7px]" viewBox="0 0 20 16"><rect x="1" y=".5" width="15" height="3" rx="1" fill="#fff" stroke="#e03030"/><path d="M1 6.500h19M1 9.500h19" stroke="#777"/><rect x="1" y="12.500" width="15" height="3" rx="1" fill="#ccc" stroke="#aaa"/></svg>GroupHeader1</div>
          <div class="h-[28px] flex items-center pl-[58px]"><svg class="w-[18px] h-[18px] mr-[9px]" viewBox="0 0 18 18"><rect x=".5" y=".5" width="17" height="17" fill="#fff" stroke="#666"/><path d="M4 1v16M14 1v16M1 4h16M1 14h16" stroke="#aaa"/><path d="M6 7h6M6 9.500h6M6 12h6" stroke="#666"/></svg>Detail</div>
          <div class="h-[28px] flex items-center pl-[34px]"><svg class="w-[14px] h-[9px] mr-[10px]"><use href="#chev"/></svg><svg class="w-[20px] h-[16px] mr-[7px]" viewBox="0 0 20 16"><rect x="1" y=".5" width="15" height="3" rx="1" fill="#ccc" stroke="#aaa"/><path d="M1 6.500h19M1 9.500h19" stroke="#777"/><rect x="1" y="12.500" width="15" height="3" rx="1" fill="#fff" stroke="#2e9148"/></svg>GroupFooter1</div>
          <div class="h-[28px] flex items-center ml-[81px] pl-[3px] bg-[#e4e4e4]"><svg class="w-[21px] h-[18px] mr-[8px]" viewBox="0 0 24 22"><use href="#minibars"/></svg>chart1</div>
          <div class="h-[28px] flex items-center pl-[58px]"><svg class="w-[18px] h-[18px] mr-[9px]" viewBox="0 0 18 18"><rect x=".5" y=".5" width="17" height="17" fill="#fff" stroke="#666"/><rect x="1" y="13" width="16" height="4" fill="#2e9148"/><path d="M6 1v12M12 1v12M1 7h16" stroke="#999"/></svg>BottomMargin</div>
          <div class="h-[28px] flex items-center pl-[29px]"><svg class="w-[21px] h-[18px] mr-[9px]" viewBox="0 0 21 18"><rect x=".5" y="4.500" width="13" height="13" fill="#f0f0f0" stroke="#999"/><rect x="3.500" y="1.500" width="13" height="13" fill="#fff" stroke="#888"/><path d="M8 12l2-3 8-8" stroke="#888" fill="none"/><path d="M8 12l1-3 2 1z" fill="#ee3d3d"/></svg>Styles</div>
          <div class="h-[28px] flex items-center pl-[7px]"><svg class="w-[14px] h-[9px] mr-[13px]"><use href="#chev"/></svg><svg class="w-[18px] h-[18px] mr-[7px]" viewBox="0 0 18 18"><circle cx="9" cy="9" r="5" fill="none" stroke="#555" stroke-width="3.500"/><path d="M9 0v4M9 14v4M0 9h4M14 9h4M2.500 2.500l3 3M12.500 12.500l3 3M15.500 2.500l-3 3M5.500 12.500l-3 3" stroke="#555" stroke-width="3"/></svg>Components</div>
          <div class="h-[28px] flex items-center pl-[55px]"><svg class="w-[22px] h-[22px] mr-[8px]" viewBox="0 0 18 18"><circle cx="9" cy="9" r="5" fill="none" stroke="#1e88d0" stroke-width="3.500"/><path d="M9 0v4M9 14v4M0 9h4M14 9h4M2.500 2.500l3 3M12.500 12.500l3 3M15.500 2.500l-3 3M5.500 12.500l-3 3" stroke="#1e88d0" stroke-width="3"/></svg>dataSet1</div>
        </div>
        <div class="flex-1 flex justify-end">
          <div class="w-[127px] mr-[114px] mt-[2px] mb-[6px] border-r border-[#d0d0d0] flex items-center justify-end pr-[11px]">Field List</div>
        </div>
      </div>
      <div class="h-[647px] mt-[5px] shrink-0 bg-[#f7f7f7] border border-[#d0d0d0] flex flex-col">
        <div class="h-[75px] pb-[10px] shrink-0 flex items-center pl-[18px] text-[26px] text-[#4a4a4a]">Properties
          <div class="ml-auto flex items-center gap-[31px] pr-[22px]">
            <svg class="w-[16px] h-[16px]"><use href="#maxi"/></svg><svg class="w-[16px] h-[16px]"><use href="#pin"/></svg><svg class="w-[16px] h-[16px]"><use href="#close"/></svg>
          </div>
        </div>
        <div class="h-[34px] mx-[12px] w-[378px] shrink-0 bg-white border border-[#b4b4b4] flex items-center justify-between pl-[4px] pr-[7px] font-bold whitespace-pre text-[17px]">chart1   Chart<svg class="w-[9px] h-[5px]"><use href="#tri"/></svg></div>
        <div class="h-[77px] shrink-0 flex items-start pt-[25px] pl-[15px] gap-[28px] mx-[1px] border-b border-[#d8d8d8] relative">
          <svg class="w-[26px] h-[26px]" viewBox="0 0 26 26"><path d="M0 25c2-7 6-11 11-11l3 3c-2 6-8 8-14 8z" fill="#ff9a38"/><path d="M12 11l3 4 3-2-3-3z" fill="#555"/><path d="M15 9l8-7 3 4-8 7z" fill="#ee3d3d"/></svg>
          <svg class="w-[26px] h-[26px]" viewBox="0 0 18 18"><circle cx="9" cy="9" r="5" fill="none" stroke="#555" stroke-width="3.500"/><path d="M9 0v4M9 14v4M0 9h4M14 9h4M2.500 2.500l3 3M12.500 12.500l3 3M15.500 2.500l-3 3M5.500 12.500l-3 3" stroke="#555" stroke-width="3"/></svg>
          <svg class="w-[22px] h-[26px]" viewBox="0 0 22 26"><ellipse cx="11" cy="5" rx="10" ry="4.500" fill="#ff9a38"/><path d="M1 8c2 4 18 4 20 0v5c-2 4-18 4-20 0zM1 16c2 4 18 4 20 0v5c-2 5-18 5-20 0z" fill="#ff9a38"/></svg>
          <svg class="w-[26px] h-[26px] ml-[2px]" viewBox="0 0 26 26"><path d="M1 4c3-5 9-4 11 0 1 2 1 3 0 5l13 11-4 5L9 14c-4 1-8 0-9-5l5 2 3-3-2-3z" fill="#555"/></svg>
          <svg class="w-[28px] h-[26px]" viewBox="0 0 28 26"><path d="M14 0l4 9 10 1-8 6 3 10-9-5-9 5 3-10-8-6 10-1z" fill="#1e88d0"/></svg>
          <div class="absolute left-[21px] bottom-[-7px] w-[13px] h-[13px] rotate-45 border-l border-t border-[#d8d8d8] bg-[#f7f7f7]"></div>
        </div>
        <div class="pt-[10px] shrink-0 flex flex-col border-b border-[#d8d8d8] mx-[1px] pb-[3px]">
          <div class="h-[36px] flex items-center pl-[35px]"><span class="w-[130px] shrink-0">Annotation Re...</span><div class="w-[192px] h-[30px] bg-white border border-[#b4b4b4] flex items-center justify-between px-[3px]">(Collection)<span class="tracking-tighter pr-[2px] text-[10px] text-[#777]">•••</span></div><svg class="w-[10px] h-[9px] ml-[13px]"><use href="#markon"/></svg></div>
          <div class="h-[36px] flex items-center pl-[35px]"><span class="w-[130px] shrink-0">Annotations</span><div class="w-[192px] h-[30px] bg-white border border-[#b4b4b4] flex items-center justify-between px-[3px]">(Collection)<span class="tracking-tighter pr-[2px] text-[10px] text-[#777]">•••</span></div><svg class="w-[10px] h-[9px] ml-[13px]"><use href="#mark"/></svg></div>
          <div class="h-[36px] flex items-center pl-[35px]"><span class="w-[130px] shrink-0">Appearance Na...</span><div class="w-[192px] h-[30px] bg-white border border-[#b4b4b4] flex items-center justify-between pl-[3px] pr-[4px]">Default<svg class="w-[9px] h-[5px]"><use href="#tri"/></svg></div><svg class="w-[10px] h-[9px] ml-[13px]"><use href="#mark"/></svg></div>
          <div class="h-[36px] flex items-center pl-[32px]"><div class="w-[21px] h-[21px] bg-white border border-[#a8a8a8] mr-[10px] shrink-0"></div><span class="w-[304px] shrink-0">Automatic Layout</span><svg class="w-[10px] h-[9px]"><use href="#mark"/></svg></div>
          <div class="h-[36px] flex items-center pl-[35px]"><span class="w-[130px] shrink-0">Background Co...</span><div class="w-[192px] h-[30px] bg-white border border-[#b4b4b4] flex items-center justify-between p-[1px] pr-[4px]"><div class="w-[166px] h-[26px] bg-[conic-gradient(#d0d0d0_25%,#fff_0_50%,#d0d0d0_0_75%,#fff_0)] bg-[size:16px_16px]"></div><svg class="w-[9px] h-[5px]"><use href="#tri"/></svg></div><svg class="w-[10px] h-[9px] ml-[13px]"><use href="#mark"/></svg></div>
          <div class="h-[36px] flex items-center pl-[18px]"><svg class="w-[8px] h-[12px] mr-[9px]" viewBox="0 0 8 12"><path d="M1 1l5 5-5 5" fill="none" stroke="#777" stroke-width="1.500"/></svg><span class="w-[130px] shrink-0">Background Im...</span><div class="w-[192px] h-[30px] bg-white border border-[#b4b4b4] flex items-center px-[3px]">(Background Image)</div><svg class="w-[10px] h-[9px] ml-[13px]"><use href="#markon"/></svg></div>
          <div class="h-[36px] flex items-center pl-[35px]"><span class="w-[130px] shrink-0">Border Color</span><div class="w-[192px] h-[30px] bg-white border border-[#b4b4b4] flex items-center justify-between p-[1px] pr-[4px]"><div class="w-[166px] h-[26px] bg-black"></div><svg class="w-[9px] h-[5px]"><use href="#tri"/></svg></div><svg class="w-[10px] h-[9px] ml-[13px]"><use href="#markon"/></svg></div>
          <div class="h-[36px] flex items-center pl-[35px]"><span class="w-[130px] shrink-0">Border Dash St...</span><div class="w-[192px] h-[30px] bg-white border border-[#b4b4b4] flex items-center justify-between pl-[4px] pr-[4px]"><div class="w-[90px] h-[2px] bg-[#555]"></div><svg class="w-[9px] h-[5px]"><use href="#tri"/></svg></div><svg class="w-[10px] h-[9px] ml-[13px]"><use href="#mark"/></svg></div>
        </div>
        <div class="mt-auto h-[42px] shrink-0 mb-[3px] mx-[3px] border-t border-[#d8d8d8] flex">
          <div class="w-[127px] pt-[3px] border-x border-b border-[#d0d0d0] -mt-[1px] bg-[#f7f7f7] text-[#1e79c9] flex items-center justify-center gap-[5px] pl-[3px]"><svg class="w-[23px] h-[24px]" viewBox="0 0 23 24"><rect x="1" y="1" width="15" height="16" fill="#fff" stroke="#555"/><path d="M1 6h15M1 11h15M6 1v16M11 1v16" stroke="#777"/><circle cx="17" cy="17" r="4" fill="none" stroke="#1e88d0" stroke-width="3"/></svg>Properties</div>
          <div class="w-[155px] pt-[3px] border-r border-[#d0d0d0] my-[2px] flex items-center justify-center gap-[7px] pl-[4px]"><svg class="w-[18px] h-[18px]" viewBox="0 0 18 18"><rect x="4.500" y=".5" width="13" height="13" fill="none" stroke="#777"/><rect x=".5" y="4.500" width="13" height="13" fill="#fff" stroke="#666"/><path d="M4 15v-3M7 15V9M10 15v-5" stroke="#1e88d0" stroke-width="1.500"/></svg>Report Gallery</div>
        </div>
      </div>
    </div>
  </div>

  <!-- status bar -->
  <div class="h-[33px] shrink-0 bg-[#f0f0f0] border-t border-[#d0d0d0] flex items-center pl-[13px] text-[16px]">
    <span>chart1 { Location:0,0 Size:900,240 }</span>
    <span class="ml-auto">100%</span>
    <div class="w-[13px] h-[2px] bg-[#777] ml-[22px]"></div>
    <div class="w-[82px] h-[1px] bg-[#106ebe] ml-[2px]"></div>
    <div class="w-[6px] h-[19px] bg-[#666]"></div>
    <div class="w-[92px] h-[1px] bg-[#bbb]"></div>
    <div class="w-[12px] h-[12px] mx-[2px] bg-[linear-gradient(#666,#666),linear-gradient(#666,#666)] bg-[size:12px_2px,2px_12px] bg-center bg-no-repeat"></div>
    <svg class="w-[14px] h-[14px] ml-[5px] mr-[5px]" viewBox="0 0 14 14"><path d="M12 2h1M8 7h1M12 7h1M4 12h1M8 12h1M12 12h1" stroke="#999" stroke-width="2"/></svg>
  </div>

  <!-- overlays: handles, smart tag, popup, callouts -->
  <div class="absolute left-[246px] top-[586px] w-[8px] h-[8px] bg-[#7f9cc6]"></div>
  <div class="absolute left-[902px] top-[586px] w-[8px] h-[8px] bg-[#7f9cc6]"></div>
  <div class="absolute left-[1559px] top-[586px] w-[8px] h-[8px] bg-[#7f9cc6]"></div>
  <div class="absolute left-[246px] top-[768px] w-[8px] h-[8px] bg-[#7f9cc6]"></div>
  <div class="absolute left-[246px] top-[951px] w-[8px] h-[8px] bg-[#7f9cc6]"></div>
  <div class="absolute left-[902px] top-[951px] w-[8px] h-[8px] bg-[#7f9cc6]"></div>
  <div class="absolute left-[1559px] top-[951px] w-[8px] h-[8px] bg-[#7f9cc6]"></div>
  <div class="absolute left-[1538px] top-[579px] w-[16px] h-[16px] bg-white border border-black flex items-center justify-center"><svg class="w-[10px] h-[12px]" viewBox="0 0 10 12"><path d="M1 1l7 5-7 5" fill="none" stroke="#000" stroke-width="1.300"/></svg></div>

  <div class="absolute left-[1554px] top-[594px] w-[368px] h-[312px] bg-[#f7f7f7] border border-[#cfcfcf] flex flex-col text-[15px] pl-[7px] pr-[7px]">
    <div class="h-[40px] shrink-0 font-bold text-[17px] flex items-center pl-[3px] mb-[3px]">Chart Tasks</div>
    <div class="mt-[10px] flex flex-col gap-[4px]">
      <div class="h-[27px] flex items-center"><span class="w-[97px] shrink-0 whitespace-nowrap">Data Source</span><div class="flex-1 h-full bg-white border border-[#aaa] flex items-center justify-between px-[4px]">dataSet1<svg class="w-[9px] h-[5px] mr-[1px]"><use href="#tri"/></svg></div></div>
      <div class="h-[27px] flex items-center"><span class="w-[97px] shrink-0 whitespace-nowrap tracking-[-0.2px]">Data Member</span><div class="flex-1 h-full bg-white border border-[#aaa] flex items-center justify-between px-[4px]">Details<svg class="w-[9px] h-[5px] mr-[1px]"><use href="#tri"/></svg></div></div>
      <div class="h-[27px] flex items-center"><span class="w-[97px] shrink-0 whitespace-nowrap">Data Adapter</span><div class="flex-1 h-full bg-white border border-[#aaa] flex items-center justify-between px-[4px]">(none)<svg class="w-[9px] h-[5px] mr-[1px]"><use href="#tri"/></svg></div></div>
    </div>
    <div class="h-px bg-[#d4d4d4] mt-[7px] shrink-0"></div>
    <div class="flex flex-col pl-[4px] text-[#1e88d0] mt-[6px] leading-[23px]">
      <span class="underline text-[15.500px]">Run Designer...</span><span>Series...</span><span>Annotations...</span><span>Palettes...</span>
    </div>
    <div class="h-px bg-[#d4d4d4] mt-[5px] mb-[5px] shrink-0"></div>
    <div class="flex flex-col pl-[4px] text-[#1e88d0] leading-[23px]"><span>Save...</span><span>Load...</span></div>
  </div>
  <div class="absolute left-[1522px] top-[569px] w-[52px] h-[37px] border-[4px] border-[#ff7f27]"></div>
  <div class="absolute left-[1542px] top-[733px] w-[175px] h-[50px] border-[5px] border-[#ff7f27]"></div>
</div>

<script>
  // values read off the chart, one row per client
  const data = [[3.7,4.0,7.5],[7.3,.85,1.4],[6.1,6.65,6.5],[4.9,8.4,4.25],[7.9,3.6,2.1],[2.7,3.5,6.25],[2.3,6.9,4.5],[7.9,8.65,3.05],[8.65,5.4,7.3],[6.65,9.3,.9]];
  const names = 'ABCDEFGHIJ';
  const x0 = 56, y0 = 304, step = 22.6, right = 1282;
  let s = '<rect x="' + x0 + '" y="74" width="' + (right - x0) + '" height="' + (y0 - 74) + '" fill="#fff" stroke="#ccc"/>';
  for (let v = 2; v <= 10; v += 2) {
    const y = y0 - v * step;
    s += '<path d="M' + x0 + ' ' + y + 'H' + right + '" stroke="#ddd" stroke-width="' + (v == 10 ? 2 : 1) + '"/>';
  }
  s += '<path d="M' + x0 + ' 74V' + y0 + 'H' + right + '" stroke="#888" fill="none" stroke-width="1.400"/>';
  for (let v = 0; v <= 10; v++) {
    const y = y0 - v * step;
    s += '<path d="M' + (v % 2 ? 51 : 47) + ' ' + y + 'H' + x0 + '" stroke="#999" stroke-width="1.400"/>';
    if (v % 2 == 0) s += '<text x="40" y="' + (y + 5) + '" text-anchor="end" font-size="16" fill="#444">$' + v + '</text>';
  }
  for (let x = x0 + 12; x < right; x += 24.5) {
    s += '<path d="M' + x + ' ' + y0 + 'v3" stroke="#999"/>';
  }
  data.forEach((row, i) => {
    const c = 116 + i * 122.6;
    ['gb', 'gr', 'gg'].forEach((g, j) => {
      const h = row[j] * step, x = c - 41 + j * 27.5, y = y0 - h;
      s += '<rect x="' + x + '" y="' + y + '" width="26.500" height="' + h + '" fill="url(#' + g + ')"/>';
      s += '<rect x="' + x + '" y="' + y + '" width="26.500" height="2.500" fill="' + ['#2f5a8e', '#7f3332', '#66853a'][j] + '"/>';
    });
    s += '<path d="M' + c + ' ' + y0 + 'v8" stroke="#999" stroke-width="1.500"/>';
    s += '<text x="' + (c + 2) + '" y="' + (y0 + 28) + '" text-anchor="middle" font-size="16" fill="#444">' + names[i] + '</text>';
  });
  s += '<text x="649" y="43" text-anchor="middle" font-size="34" fill="#333">Client Group Stats</text>';
  document.getElementById('chart').innerHTML = s;
</script>
</body>
</html>
